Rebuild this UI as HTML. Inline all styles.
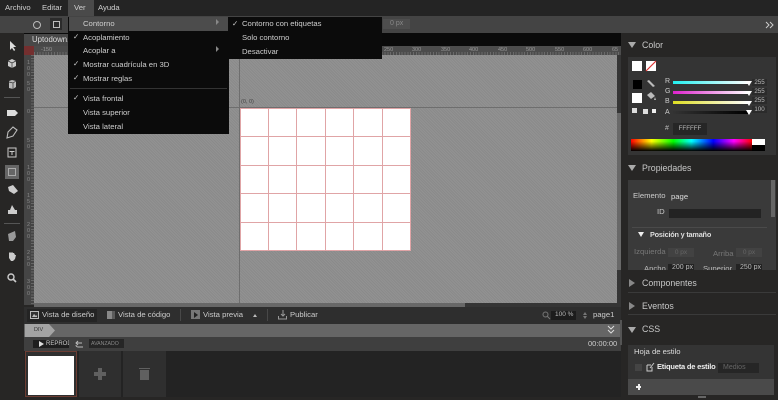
<!DOCTYPE html>
<html><head><meta charset="utf-8"><style>
html,body{margin:0;padding:0;background:#272625}
body{width:778px;height:400px;overflow:hidden;position:relative;font-family:"Liberation Sans",sans-serif;font-size:7.7px;color:#ddd}
.a{position:absolute}
.t{position:absolute;white-space:nowrap;line-height:12px}
svg{position:absolute;overflow:visible}
.m{font-size:7.7px;color:#cfcfcf}
.h{font-size:8.8px;color:#c8c8c8}
.tri{position:absolute;width:0;height:0;border-left:4px solid transparent;border-right:4px solid transparent;border-top:6px solid #aaa}
.trr{position:absolute;width:0;height:0;border-top:4px solid transparent;border-bottom:4px solid transparent;border-left:6px solid #888}
.ln{position:absolute;background:#e0a4a6}
.in{position:absolute;background:#303030;height:9px;color:#666;font-size:6.5px;line-height:9px;text-align:center}
.r{position:absolute;font-size:5.5px;line-height:7px;color:#999;white-space:nowrap}
.v{position:absolute;left:26px;width:5px;font-size:5.5px;line-height:6px;color:#888;text-align:center}
.n{position:absolute;left:752px;width:15px;height:7px;line-height:7px;color:#bbb;font-size:6.2px;text-align:center;background:#2b2b2b}
.th{position:absolute;left:746px;border-top:5px solid #fff;border-left:3px solid transparent;border-right:3px solid transparent}
.lb{position:absolute;left:665px;font-size:7px;color:#ccc;line-height:9px}
</style></head><body>
<!-- top bars -->
<div class="a" style="left:0;top:0;width:778px;height:16px;background:#242424"></div>
<div class="t m" style="left:5px;top:2px">Archivo</div>
<div class="t m" style="left:42px;top:2px">Editar</div>
<div class="a" style="left:68px;top:0;width:26px;height:17px;background:#4a4a4a"></div>
<div class="t m" style="left:74px;top:2px">Ver</div>
<div class="t m" style="left:98px;top:2px">Ayuda</div>
<div class="a" style="left:0;top:16px;width:778px;height:17px;background:#444"></div>
<div class="a" style="left:33px;top:21px;width:6px;height:6px;border:1px solid #bbb;border-radius:50%"></div>
<div class="a" style="left:50px;top:18px;width:12px;height:12px;background:#2b2b2b"></div>
<div class="a" style="left:53px;top:21px;width:5px;height:5px;border:1px solid #bbb"></div>
<div class="a" style="left:383px;top:19px;width:27px;height:10px;background:#4e4e4e"></div>
<div class="t" style="left:390px;top:18px;font-size:7px;color:#888">0 px</div>
<svg style="left:766px;top:22px" width="9" height="7" fill="none" stroke="#ccc" stroke-width="1"><path d="M0 0l3 3-3 3M4 0l3 3-3 3"/></svg>
<!-- left toolbar -->
<svg style="left:0;top:33px" width="24" height="125" fill="#ccc">
<path d="M10 8v9l2-2 2 3 1.2-1-2-3h3z" fill="#ddd"/>
<path d="M8 28l4-2 4 2v5l-4 2-4-2z" fill="#ccc"/><path d="M12 30v5M8 28l4 2 4-2" stroke="#333" fill="none" stroke-width=".7"/>
<path d="M9 48l3-1 4 1v6l-3 2-4-1z" fill="#bbb"/><path d="M9 49l4 1 3-2M13 50v6" stroke="#333" fill="none" stroke-width=".7"/>
<rect x="4" y="64" width="16" height="1" fill="#555"/>
<path d="M7 77h8l3 3-3 3H7z" fill="#ddd"/>
<path d="M7 105l1-6 5-5 4 3-4 6z" fill="none" stroke="#bbb" stroke-width="1.1"/>
<path d="M8 115h8v9H8z" fill="none" stroke="#ccc"/><path d="M9.5 118h5v1h-2v3h-1v-3h-2z"/>
</svg>
<div class="a" style="left:5px;top:165px;width:14px;height:14px;background:#666"></div>
<div class="a" style="left:8px;top:168px;width:6px;height:6px;border:1px solid #aaa"></div>
<svg style="left:0;top:180px" width="24" height="120" fill="#ccc">
<path d="M8 7l5-2 5 6-4 3-5-3z"/>
<path d="M12 25l3 5h2v4H8v-4h2z"/>
<rect x="4" y="43" width="16" height="1" fill="#555"/>
<path d="M8 54l7-3 1 6-3 4H9z" fill="#999"/>
<path d="M9 78v-5l1-1 1 1 1-1 1 1 1 0 1 2 1 0-1 4-2 2h-2z"/>
<circle cx="11" cy="97" r="3" fill="none" stroke="#ccc" stroke-width="1.4"/><path d="M13 99l3 3" stroke="#ccc" stroke-width="1.6"/>
</svg>
<!-- canvas -->
<div class="a" style="left:24px;top:33px;width:597px;height:14px;background:#0a0a0a"></div>
<div class="a" style="left:24px;top:34px;width:46px;height:13px;background:#484848"></div>
<div class="t" style="left:32px;top:34px;font-size:7.8px;color:#ddd;width:38px;overflow:hidden">Uptodown.t</div>
<div class="a" style="left:34px;top:55px;width:583px;height:248px;background:repeating-linear-gradient(45deg,#8a8a8a 0 1px,#929292 1px 2px)"></div>
<!-- top ruler -->
<div class="a" style="left:34px;top:46px;width:587px;height:9px;background:repeating-linear-gradient(90deg,#6a6a6a 0 1px,transparent 1px 2.85px) 0 6px/100% 3px no-repeat,#4c4c4c"></div>
<div class="a" style="left:24px;top:46px;width:10px;height:9px;background:#742f2f"></div>
<div class="r" style="left:41px;top:47px">-150</div>
<div class="r" style="left:384px;top:47px">250</div>
<div class="r" style="left:412px;top:47px">300</div>
<div class="r" style="left:441px;top:47px">350</div>
<div class="r" style="left:469px;top:47px">400</div>
<div class="r" style="left:498px;top:47px">450</div>
<div class="r" style="left:526px;top:47px">500</div>
<div class="r" style="left:555px;top:47px">550</div>
<div class="r" style="left:583px;top:47px">600</div>
<div class="r" style="left:612px;top:47px">65</div>
<!-- left ruler -->
<div class="a" style="left:24px;top:55px;width:10px;height:250px;background:repeating-linear-gradient(180deg,#666 0 1px,transparent 1px 2.85px) 7px 0/3px 100% no-repeat,#454545"></div>
<div class="v" style="top:60px">1<br>0<br>0</div>
<div class="v" style="top:81px">5<br>0</div>
<div class="v" style="top:109px">0</div>
<div class="v" style="top:138px">5<br>0</div>
<div class="v" style="top:165px">1<br>0<br>0</div>
<div class="v" style="top:193px">1<br>5<br>0</div>
<div class="v" style="top:222px">2<br>0<br>0</div>
<div class="v" style="top:250px">2<br>5<br>0</div>
<div class="v" style="top:279px">3<br>0<br>0</div>
<div class="a" style="left:34px;top:107px;width:583px;height:1px;background:#6e6e6e"></div>
<div class="a" style="left:239px;top:55px;width:1px;height:248px;background:#6e6e6e"></div>
<div class="t" style="left:241px;top:96px;font-size:5.5px;color:#444">(0, 0)</div>
<div class="a" style="left:240px;top:108px;width:171px;height:142px;background:#fff"></div>
<div class="ln" style="left:268px;top:108px;width:1px;height:142px"></div>
<div class="ln" style="left:296px;top:108px;width:1px;height:142px"></div>
<div class="ln" style="left:325px;top:108px;width:1px;height:142px"></div>
<div class="ln" style="left:353px;top:108px;width:1px;height:142px"></div>
<div class="ln" style="left:382px;top:108px;width:1px;height:142px"></div>
<div class="ln" style="left:410px;top:108px;width:1px;height:143px"></div>
<div class="ln" style="left:240px;top:108px;width:1px;height:142px"></div>
<div class="ln" style="left:240px;top:108px;width:171px;height:1px"></div>
<div class="ln" style="left:240px;top:136px;width:171px;height:1px"></div>
<div class="ln" style="left:240px;top:165px;width:171px;height:1px"></div>
<div class="ln" style="left:240px;top:193px;width:171px;height:1px"></div>
<div class="ln" style="left:240px;top:222px;width:171px;height:1px"></div>
<div class="ln" style="left:240px;top:250px;width:171px;height:1px"></div>
<!-- scrollbars -->
<div class="a" style="left:617px;top:55px;width:4px;height:252px;background:#353535"></div>
<div class="a" style="left:617px;top:113px;width:4px;height:157px;background:#686868"></div>
<div class="a" style="left:34px;top:303px;width:587px;height:4px;background:#353535"></div>
<div class="a" style="left:34px;top:303px;width:431px;height:4px;background:#686868"></div>
<!-- menus -->
<div class="a" style="left:68px;top:17px;width:161px;height:117px;background:#0b0b0b"></div>
<div class="a" style="left:69px;top:17px;width:159px;height:14px;background:#4c4c4c"></div>
<div class="a" style="left:229px;top:17px;width:153px;height:42px;background:#0b0b0b"></div>
<div class="t m" style="left:83px;top:18px">Contorno</div>
<div class="t m" style="left:83px;top:32px">Acoplamiento</div>
<div class="t m" style="left:83px;top:45px">Acoplar a</div>
<div class="t m" style="left:83px;top:59px">Mostrar cuadrícula en 3D</div>
<div class="t m" style="left:83px;top:73px">Mostrar reglas</div>
<div class="t m" style="left:83px;top:93px">Vista frontal</div>
<div class="t m" style="left:83px;top:107px">Vista superior</div>
<div class="t m" style="left:83px;top:121px">Vista lateral</div>
<div class="a" style="left:70px;top:88px;width:157px;height:1px;background:#333"></div>
<div class="t m" style="left:73px;top:31px">✓</div>
<div class="t m" style="left:73px;top:58px">✓</div>
<div class="t m" style="left:73px;top:72px">✓</div>
<div class="t m" style="left:73px;top:92px">✓</div>
<div class="a" style="left:216px;top:19px;border-left:3px solid #888;border-top:3px solid transparent;border-bottom:3px solid transparent"></div>
<div class="a" style="left:216px;top:46px;border-left:3px solid #888;border-top:3px solid transparent;border-bottom:3px solid transparent"></div>
<div class="t m" style="left:232px;top:18px">✓</div>
<div class="t m" style="left:242px;top:18px">Contorno con etiquetas</div>
<div class="t m" style="left:242px;top:32px">Solo contorno</div>
<div class="t m" style="left:242px;top:46px">Desactivar</div>
<!-- bottom bar -->
<div class="a" style="left:24px;top:307px;width:597px;height:17px;background:#2e2e2e"></div>
<div class="a" style="left:27px;top:309px;width:70px;height:13px;background:#242424"></div>
<svg style="left:30px;top:311px" width="9" height="8"><rect x=".5" y=".5" width="8" height="7" fill="#333" stroke="#bbb"/><path d="M2 6l2-3 2 2 1-1v2z" fill="#bbb"/></svg>
<div class="t m" style="left:42px;top:309px;color:#ccc">Vista de diseño</div>
<svg style="left:107px;top:311px" width="8" height="8"><rect width="5" height="8" fill="#888"/><path d="M5 1h3M5 3h3M5 5h3M5 7h3" stroke="#888"/></svg>
<div class="t m" style="left:118px;top:309px;color:#ccc">Vista de código</div>
<div class="a" style="left:180px;top:309px;width:1px;height:12px;background:#484848"></div>
<div class="a" style="left:191px;top:310px;width:9px;height:9px;background:#777"></div>
<div class="a" style="left:194px;top:312px;border-left:4px solid #222;border-top:3px solid transparent;border-bottom:3px solid transparent"></div>
<div class="t m" style="left:203px;top:309px;color:#ccc">Vista previa</div>
<div class="a" style="left:253px;top:314px;border-bottom:3px solid #bbb;border-left:2px solid transparent;border-right:2px solid transparent"></div>
<div class="a" style="left:267px;top:309px;width:1px;height:12px;background:#484848"></div>
<svg style="left:278px;top:310px" width="10" height="10" fill="none" stroke="#999"><path d="M5 0v6M3 4l2 2 2-2M.5 6v3h8V6"/></svg>
<div class="t m" style="left:290px;top:309px;color:#ccc">Publicar</div>
<svg style="left:542px;top:311px" width="9" height="9" fill="none" stroke="#777"><circle cx="3.5" cy="3.5" r="2.5"/><path d="M5 5l3 3"/></svg>
<div class="a" style="left:551px;top:311px;width:25px;height:9px;background:#1c1c1c"></div>
<div class="t" style="left:555px;top:309px;font-size:6.5px;color:#bbb">100 %</div>
<div class="a" style="left:583px;top:312px;border-bottom:3px solid #777;border-left:2px solid transparent;border-right:2px solid transparent"></div>
<div class="a" style="left:583px;top:316px;border-top:3px solid #777;border-left:2px solid transparent;border-right:2px solid transparent"></div>
<div class="t m" style="left:593px;top:309px;color:#ccc">page1</div>
<!-- timeline -->
<div class="a" style="left:24px;top:324px;width:597px;height:13px;background:#666"></div>
<div class="a" style="left:25px;top:324px;width:30px;height:13px;background:#a4a4a4;clip-path:polygon(0 0,80% 0,100% 50%,80% 100%,0 100%)"></div>
<div class="t" style="left:34px;top:325px;font-size:5.5px;color:#333;line-height:11px">DIV</div>
<svg style="left:607px;top:326px" width="8" height="9" fill="none" stroke="#ddd" stroke-width="1"><path d="M1 0l3 3 3-3M1 4l3 3 3-3"/></svg>
<div class="a" style="left:24px;top:337px;width:597px;height:14px;background:#3f3f3f"></div>
<div class="a" style="left:33px;top:340px;width:36px;height:8px;background:#1e1e1e"></div>
<div class="a" style="left:39px;top:341px;border-left:5px solid #ddd;border-top:3px solid transparent;border-bottom:3px solid transparent"></div>
<div class="t" style="left:46px;top:338px;font-size:6px;color:#ccc;width:23px;overflow:hidden">REPRODUCIR</div>
<svg style="left:75px;top:341px" width="9" height="7" fill="none" stroke="#bbb"><path d="M8 6H3a2 2 0 0 1-2-2M1 2h6"/><path d="M3 0L1 2l2 2"/></svg>
<div class="a" style="left:89px;top:339px;width:35px;height:9px;background:#262626"></div>
<div class="t" style="left:91px;top:338px;font-size:5.2px;color:#888">AVANZADO</div>
<div class="t" style="left:588px;top:338px;font-size:7.5px;color:#ccc">00:00:00</div>
<div class="a" style="left:24px;top:351px;width:597px;height:46px;background:#232323"></div>
<div class="a" style="left:25px;top:351px;width:52px;height:46px;background:#2f2f2f;box-sizing:border-box;border:1px solid #6c3d33"></div>
<div class="a" style="left:28px;top:356px;width:46px;height:39px;background:#fff"></div>
<div class="a" style="left:79px;top:351px;width:42px;height:46px;background:#2f2f2f"></div>
<div class="a" style="left:123px;top:351px;width:43px;height:46px;background:#2f2f2f"></div>
<div class="a" style="left:94px;top:372px;width:12px;height:4px;background:#606060"></div>
<div class="a" style="left:98px;top:368px;width:4px;height:12px;background:#606060"></div>
<div class="a" style="left:140px;top:370px;width:9px;height:10px;background:#606060"></div>
<div class="a" style="left:139px;top:368px;width:11px;height:1px;background:#606060"></div>
<!-- right panel -->
<div class="tri" style="left:628px;top:42px"></div>
<div class="t h" style="left:642px;top:39px">Color</div>
<div class="a" style="left:628px;top:57px;width:148px;height:98px;background:#343434"></div>
<div class="a" style="left:632px;top:61px;width:10px;height:10px;background:#fff"></div>
<div class="a" style="left:646px;top:61px;width:10px;height:10px;background:#fff"></div>
<svg style="left:646px;top:61px" width="10" height="10"><path d="M0 10L10 0" stroke="#d33" stroke-width="1.2"/></svg>
<div class="a" style="left:633px;top:80px;width:9px;height:9px;background:#000"></div>
<div class="a" style="left:632px;top:93px;width:10px;height:10px;background:#fff"></div>
<svg style="left:646px;top:80px" width="11" height="24" fill="#bbb"><path d="M1 1l2-1 6 6-2 1zM1 15l4-3 4 4-4 3zM9 17l1 3-2 0z"/></svg>
<div class="a" style="left:632px;top:108px;width:5px;height:5px;background:#ddd"></div>
<div class="a" style="left:643px;top:109px;width:5px;height:5px;background:#ddd"></div>
<div class="a" style="left:652px;top:109px;width:4px;height:4px;background:#eee"></div>
<div class="lb" style="top:77px">R</div>
<div class="lb" style="top:87px">G</div>
<div class="lb" style="top:97px">B</div>
<div class="lb" style="top:108px">A</div>
<div class="a" style="left:673px;top:81px;width:75px;height:3px;background:linear-gradient(90deg,#2ee,#fff)"></div>
<div class="a" style="left:673px;top:91px;width:75px;height:3px;background:linear-gradient(90deg,#d2c,#fff)"></div>
<div class="a" style="left:673px;top:101px;width:75px;height:3px;background:linear-gradient(90deg,#dd2,#fff)"></div>
<div class="a" style="left:673px;top:111px;width:75px;height:3px;background:linear-gradient(90deg,#333,#000)"></div>
<div class="th" style="top:81px"></div>
<div class="th" style="top:91px"></div>
<div class="th" style="top:101px"></div>
<div class="th" style="top:110px"></div>
<div class="n" style="top:79px">255</div>
<div class="n" style="top:88px">255</div>
<div class="n" style="top:97px">255</div>
<div class="n" style="top:106px">100</div>
<div class="t" style="left:665px;top:123px;font-size:7px;color:#bbb">#</div>
<div class="a" style="left:673px;top:123px;width:34px;height:12px;line-height:12px;color:#bbb;font-size:6.2px;background:#262626;text-align:center">FFFFFF</div>
<div class="a" style="left:631px;top:139px;width:121px;height:12px;background:linear-gradient(180deg,rgba(0,0,0,0) 20%,#000 100%),linear-gradient(90deg,#f00,#ff0 17%,#0f0 35%,#0ff 50%,#00f 68%,#f0f 85%,#f00)"></div>
<div class="a" style="left:752px;top:139px;width:13px;height:6px;background:#fff"></div>
<div class="a" style="left:752px;top:145px;width:13px;height:6px;background:#000"></div>
<div class="tri" style="left:628px;top:165px"></div>
<div class="t h" style="left:642px;top:162px">Propiedades</div>
<div class="a" style="left:628px;top:180px;width:148px;height:90px;background:#3a3a3a"></div>
<div class="a" style="left:771px;top:180px;width:4px;height:37px;background:#666"></div>
<div class="t" style="left:633px;top:190px;font-size:7.7px;color:#ccc">Elemento</div>
<div class="t" style="left:671px;top:191px;font-size:7.7px;color:#ddd">page</div>
<div class="t" style="left:657px;top:206px;font-size:7.7px;color:#ccc">ID</div>
<div class="a" style="left:669px;top:209px;width:92px;height:9px;background:#232323"></div>
<div class="a" style="left:632px;top:227px;width:135px;height:1px;background:#4a4a4a"></div>
<div class="a" style="left:638px;top:232px;border-top:5px solid #eee;border-left:3px solid transparent;border-right:3px solid transparent"></div>
<div class="t" style="left:650px;top:229px;font-size:7.3px;color:#ddd;font-weight:bold;letter-spacing:-.2px">Posición y tamaño</div>
<div class="t" style="left:634px;top:246px;font-size:7.7px;color:#777">Izquierda</div>
<div class="in" style="left:668px;top:248px;width:26px;background:#424242">0 px</div>
<div class="t" style="left:713px;top:248px;font-size:7.7px;color:#777">Arriba</div>
<div class="in" style="left:736px;top:248px;width:26px;background:#424242">0 px</div>
<div class="t" style="left:644px;top:263px;font-size:7.7px;color:#bbb;height:7px;overflow:hidden">Ancho</div>
<div class="a" style="left:668px;top:264px;width:26px;height:6px;background:#232323"></div>
<div class="t" style="left:672px;top:262px;font-size:7px;color:#bbb;height:8px;overflow:hidden">200 px</div>
<div class="t" style="left:703px;top:263px;font-size:7.7px;color:#bbb;height:7px;overflow:hidden">Superior</div>
<div class="a" style="left:736px;top:264px;width:26px;height:6px;background:#232323"></div>
<div class="t" style="left:740px;top:262px;font-size:7px;color:#bbb;height:8px;overflow:hidden">250 px</div>
<div class="trr" style="left:629px;top:279px"></div>
<div class="t h" style="left:642px;top:277px">Componentes</div>
<div class="a" style="left:628px;top:292px;width:148px;height:1px;background:#3a3a3a"></div>
<div class="trr" style="left:629px;top:302px"></div>
<div class="t h" style="left:642px;top:300px">Eventos</div>
<div class="a" style="left:628px;top:314px;width:148px;height:1px;background:#3a3a3a"></div>
<div class="tri" style="left:628px;top:327px"></div>
<div class="t h" style="left:642px;top:323px">CSS</div>
<div class="a" style="left:628px;top:345px;width:146px;height:50px;background:#343434"></div>
<div class="t" style="left:634px;top:346px;font-size:7.7px;color:#ddd">Hoja de estilo</div>
<div class="a" style="left:635px;top:364px;width:7px;height:7px;background:#444"></div>
<svg style="left:646px;top:362px" width="9" height="10" fill="none" stroke="#ccc"><path d="M1 3h4M1 3v6h5V5M4 6l4-5"/></svg>
<div class="t" style="left:657px;top:361px;font-size:7.5px;color:#eee;font-weight:bold;letter-spacing:-.2px">Etiqueta de estilo</div>
<div class="a" style="left:718px;top:363px;width:41px;height:10px;background:#262626"></div>
<div class="t" style="left:723px;top:362px;font-size:7px;color:#666">Medios</div>
<div class="a" style="left:628px;top:379px;width:146px;height:16px;background:#4a4a4a"></div>
<div class="a" style="left:636px;top:386px;width:5px;height:1px;background:#eee;box-shadow:0 1px 0 #eee"></div>
<div class="a" style="left:638px;top:384px;width:2px;height:6px;background:#eee"></div>
<div class="a" style="left:698px;top:396px;width:8px;height:2px;background:#666"></div>
<div class="a" style="left:620px;top:320px;width:2px;height:25px;background:#555"></div>
</body></html>
